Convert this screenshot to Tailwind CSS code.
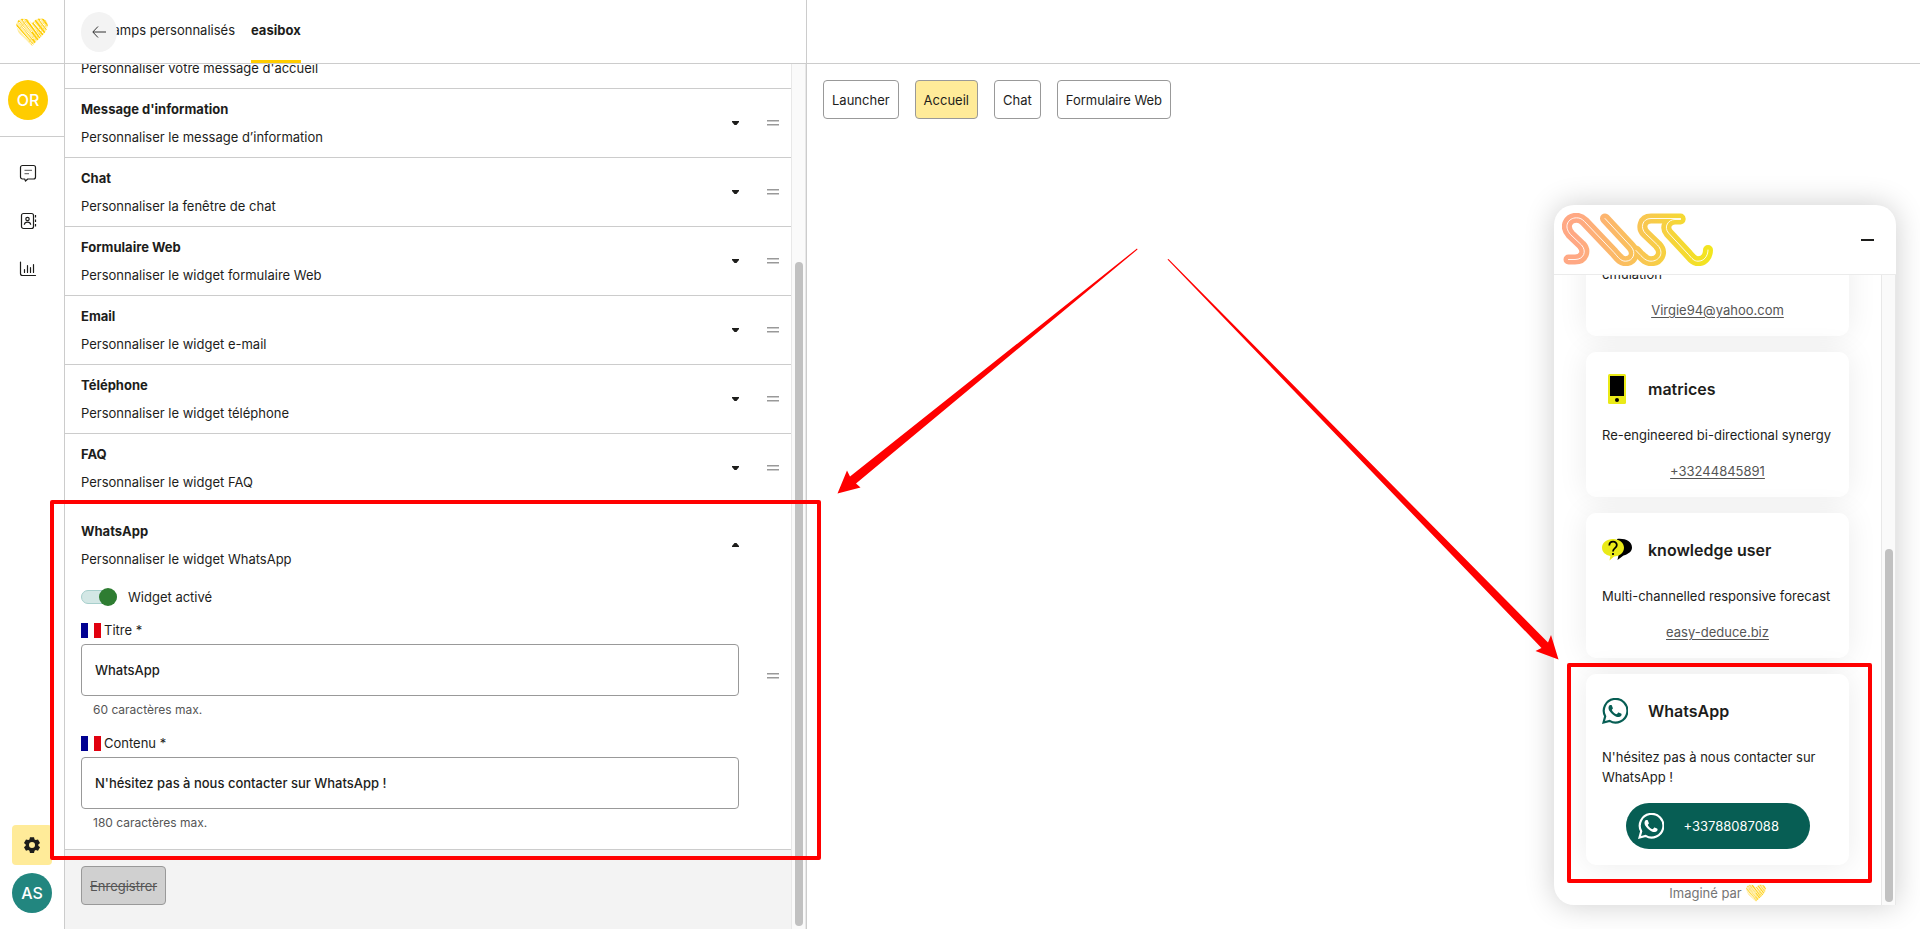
<!DOCTYPE html>
<html lang="fr">
<head>
    <meta charset="UTF-8" />
    <title>easibox</title>
    <script src="https://cdn.jsdelivr.net/npm/@tailwindcss/browser@4"></script>
</head>
<body class="relative flex h-screen overflow-hidden bg-white font-['Inter','Liberation_Sans',sans-serif] text-[13px] leading-5 text-[#1d1d1b]">

<!-- Shared shapes -->
<svg class="absolute h-0 w-0" aria-hidden="true">
    <defs>
        <clipPath id="heartClip">
            <path d="M16 28C11 22 1 16 .5 8 0 3 4 .5 8 .8c4 .2 6 2 8 4.700C18 2.500 21 .5 25 .6c4 .2 7 3 6.700 7C31 16 21 22 16 28z" />
        </clipPath>
        <symbol id="heart" viewBox="0 0 32 28">
            <g clip-path="url(#heartClip)" fill="none">
                <path d="M0 0h32v28H0z" fill="#ffefad" />
                <path d="M-2 4l20 24M1 1l20 26M5 0l17 22M9 0l15 20M11 3l14 16M-1 11l16 18M16 4l11 13M19 2l10 13M22 0l9 12M26 0l6 8" stroke="#ffcc00" stroke-width="1.500" />
                <path d="M-1 7l18 20M3 4l14 17M7 2l9 12M13 3l12 17M18 5l9 10M24 2l7 9M2 14l10 10" stroke="#fff" stroke-width="1" />
                <path d="M15 27L31 6M13 24L30 2M4 10L12 1" stroke="#ffd83d" stroke-width=".7" />
            </g>
        </symbol>
        <symbol id="whatsapp" viewBox="0 0 24 24">
            <path fill="currentColor" d="M17.472 14.382c-.297-.149-1.758-.867-2.030-.967-.273-.099-.471-.148-.670.150-.197.297-.767.966-.940 1.164-.173.199-.347.223-.644.075-.297-.150-1.255-.463-2.390-1.475-.883-.788-1.480-1.761-1.653-2.059-.173-.297-.018-.458.130-.606.134-.133.298-.347.446-.520.149-.174.198-.298.298-.497.099-.198.050-.371-.025-.520-.075-.149-.669-1.612-.916-2.207-.242-.579-.487-.5-.669-.510-.173-.008-.371-.010-.570-.010-.198 0-.520.074-.792.372-.272.297-1.040 1.016-1.040 2.479 0 1.462 1.065 2.875 1.213 3.074.149.198 2.096 3.200 5.077 4.487.709.306 1.262.489 1.694.625.712.227 1.360.195 1.871.118.571-.085 1.758-.719 2.006-1.413.248-.694.248-1.289.173-1.413-.074-.124-.272-.198-.570-.347z" />
            <path fill="none" stroke="currentColor" stroke-width="2" d="M1.400 22.600l1.550-5.700A10.900 10.900 0 1 1 7 21.100z" />
        </symbol>
        <symbol id="caret" viewBox="0 0 7 4">
            <path fill="currentColor" d="M0 0h7v1L4.500 4h-2L0 1z" />
        </symbol>
        <symbol id="drag" viewBox="0 0 12 6">
            <path fill="#999" d="M0 0h12v1.500H0zM0 4h12v1.500H0z" />
        </symbol>
    </defs>
</svg>

<!-- Sidebar -->
<nav class="flex w-[65px] shrink-0 flex-col border-r border-[#ccc]">
    <a href="#" aria-label="Accueil" class="flex h-16 shrink-0 items-center justify-center border-b border-[#ccc]">
        <svg class="h-7 w-8"><use href="#heart" /></svg>
    </a>
    <div class="flex h-[73px] shrink-0 items-center border-b border-[#ccc] pl-2">
        <span class="flex size-10 items-center justify-center rounded-full bg-[#ffcc00] text-base font-medium text-white">OR</span>
    </div>
    <div class="flex w-14 flex-1 flex-col items-center gap-6 pt-6">
        <a href="#" aria-label="Conversations">
            <svg class="size-6" viewBox="0 0 24 24" fill="none" stroke="#1d1d1b" stroke-width="1.200" stroke-linejoin="round"><path d="M6.500 4.500h11a2 2 0 0 1 2 2v9.500a2 2 0 0 1-2 2h-5.800L9.500 20l-.8-2H6.500a2 2 0 0 1-2-2V6.500a2 2 0 0 1 2-2z" /><path d="M8.500 9.300h7.500M8.500 12.700h4.500" stroke="#777" /></svg>
        </a>
        <a href="#" aria-label="Contacts">
            <svg class="size-6" viewBox="0 0 24 24" fill="none" stroke="#1d1d1b" stroke-width="1.200"><rect x="5.500" y="4.500" width="12" height="15" rx="2" /><circle cx="11.500" cy="10" r="1.700" /><path d="M8.300 15.700c.4-3.400 6-3.400 6.400 0" /><path d="M19.500 6v2.500M19.500 10.500V13M19.500 15v2.500" /></svg>
        </a>
        <a href="#" aria-label="Statistiques">
            <svg class="size-6" viewBox="0 0 24 24" fill="none" stroke="#1d1d1b" stroke-width="1.200" stroke-linecap="round"><path d="M4.500 5v11.500a2 2 0 0 0 2 2h13" /><path d="M8.500 12.500v3M11.500 8.500v7M14.500 10.500v5M17.500 7.500v8" /></svg>
        </a>
    </div>
    <div class="flex flex-col items-center gap-2 pb-4">
        <a href="#" aria-label="Paramètres" class="flex size-10 items-center justify-center rounded bg-[#ffeb99]">
            <svg class="size-[18px]" viewBox="0 0 24 24" fill="#1d1d1b"><path fill-rule="evenodd" d="M9.300 1.500h5.400l.7 3 1.600.9 3-.9 2.700 4.700-2.300 2v1.700l2.300 2-2.700 4.700-3-.9-1.600.9-.7 3H9.300l-.7-3-1.600-.9-3 .9-2.700-4.700 2.300-2v-1.700l-2.300-2L4 4.500l3 .9 1.600-.9zM12 8a4 4 0 1 0 0 8 4 4 0 0 0 0-8z" /></svg>
        </a>
        <span class="flex size-10 items-center justify-center rounded-full bg-[#22867f] text-base font-medium text-white">AS</span>
    </div>
</nav>

<div class="flex min-w-0 flex-1">
    <!-- Settings panel -->
    <section class="flex w-2/5 flex-col border-r border-[#ccc]">
        <header class="relative flex h-16 shrink-0 gap-4 border-b border-[#ccc] px-4">
            <a href="#" class="flex w-[154px] items-center justify-end whitespace-nowrap pb-[3px]">Champs personnalisés</a>
            <a href="#" class="flex items-center border-b-3 border-[#ffcc00] font-bold">easibox</a>
            <button type="button" aria-label="Retour" class="absolute top-3 left-4 flex h-10 w-9 items-center justify-center rounded-[50%] bg-[#f3f3f3]">
                <svg class="h-3 w-[14px]" viewBox="0 0 14 12" fill="none" stroke="#333"><path d="M14 6H1M6 .5L.8 6 6 11.500" /></svg>
            </button>
        </header>

        <div class="flex min-h-0 flex-1">
            <div class="flex min-w-0 flex-1 flex-col justify-end overflow-hidden">
                <div class="flex shrink-0 items-center border-b border-[#ccc] py-2.5">
                    <div class="flex-1 pl-4">
                        <h2 class="font-bold">Message d'accueil</h2>
                        <p class="mt-2">Personnaliser votre message d'accueil</p>
                    </div>
                </div>
                <div class="flex shrink-0 items-center border-b border-[#ccc] py-2.5">
                    <div class="flex-1 pl-4">
                        <h2 class="font-bold">Message d'information</h2>
                        <p class="mt-2">Personnaliser le message d’information</p>
                    </div>
                    <button type="button" aria-label="Ouvrir"><svg class="h-1 w-[7px]"><use href="#caret" /></svg></button>
                    <div class="w-[52px] pl-7"><svg class="h-1.5 w-3"><use href="#drag" /></svg></div>
                </div>
                <div class="flex shrink-0 items-center border-b border-[#ccc] py-2.5">
                    <div class="flex-1 pl-4">
                        <h2 class="font-bold">Chat</h2>
                        <p class="mt-2">Personnaliser la fenêtre de chat</p>
                    </div>
                    <button type="button" aria-label="Ouvrir"><svg class="h-1 w-[7px]"><use href="#caret" /></svg></button>
                    <div class="w-[52px] pl-7"><svg class="h-1.5 w-3"><use href="#drag" /></svg></div>
                </div>
                <div class="flex shrink-0 items-center border-b border-[#ccc] py-2.5">
                    <div class="flex-1 pl-4">
                        <h2 class="font-bold">Formulaire Web</h2>
                        <p class="mt-2">Personnaliser le widget formulaire Web</p>
                    </div>
                    <button type="button" aria-label="Ouvrir"><svg class="h-1 w-[7px]"><use href="#caret" /></svg></button>
                    <div class="w-[52px] pl-7"><svg class="h-1.5 w-3"><use href="#drag" /></svg></div>
                </div>
                <div class="flex shrink-0 items-center border-b border-[#ccc] py-2.5">
                    <div class="flex-1 pl-4">
                        <h2 class="font-bold">Email</h2>
                        <p class="mt-2">Personnaliser le widget e-mail</p>
                    </div>
                    <button type="button" aria-label="Ouvrir"><svg class="h-1 w-[7px]"><use href="#caret" /></svg></button>
                    <div class="w-[52px] pl-7"><svg class="h-1.5 w-3"><use href="#drag" /></svg></div>
                </div>
                <div class="flex shrink-0 items-center border-b border-[#ccc] py-2.5">
                    <div class="flex-1 pl-4">
                        <h2 class="font-bold">Téléphone</h2>
                        <p class="mt-2">Personnaliser le widget téléphone</p>
                    </div>
                    <button type="button" aria-label="Ouvrir"><svg class="h-1 w-[7px]"><use href="#caret" /></svg></button>
                    <div class="w-[52px] pl-7"><svg class="h-1.5 w-3"><use href="#drag" /></svg></div>
                </div>
                <div class="flex shrink-0 items-center border-b border-[#ccc] py-2.5">
                    <div class="flex-1 pl-4">
                        <h2 class="font-bold">FAQ</h2>
                        <p class="mt-2">Personnaliser le widget FAQ</p>
                    </div>
                    <button type="button" aria-label="Ouvrir"><svg class="h-1 w-[7px]"><use href="#caret" /></svg></button>
                    <div class="w-[52px] pl-7"><svg class="h-1.5 w-3"><use href="#drag" /></svg></div>
                </div>

                <!-- WhatsApp, open -->
                <form class="flex shrink-0 items-center border-b border-[#ccc]">
                    <div class="flex flex-1 flex-col pt-[18px] pb-4 pl-4">
                        <div class="flex items-center">
                            <div class="flex-1">
                                <h2 class="font-bold">WhatsApp</h2>
                                <p class="mt-2">Personnaliser le widget WhatsApp</p>
                            </div>
                            <button type="button" aria-label="Fermer"><svg class="h-1 w-[7px] rotate-180"><use href="#caret" /></svg></button>
                        </div>
                        <label class="mt-[18px] flex items-center gap-[11px]">
                            <input type="checkbox" checked class="relative h-3.5 w-9 appearance-none rounded-full border border-[#a7cfcc] bg-[#d3e7e5] before:absolute before:-top-[3px] before:-right-px before:size-[18px] before:rounded-full before:bg-[#2e7d32]" />
                            Widget activé
                        </label>
                        <label for="titre" class="mt-[13px] flex items-center gap-[3px]">
                            <svg class="h-[15px] w-5" viewBox="0 0 20 15"><path fill="#000091" d="M0 0h7v15H0z" /><path fill="#e1000f" d="M13 0h7v15h-7z" /></svg>
                            Titre *
                        </label>
                        <input id="titre" type="text" value="WhatsApp" class="mt-1 h-[52px] w-full rounded border border-[#999] px-[13px] font-medium" />
                        <p class="mt-1 pl-3 text-xs leading-5 text-[#555]">60 caractères max.</p>
                        <label for="contenu" class="mt-[13px] flex items-center gap-[3px]">
                            <svg class="h-[15px] w-5" viewBox="0 0 20 15"><path fill="#000091" d="M0 0h7v15H0z" /><path fill="#e1000f" d="M13 0h7v15h-7z" /></svg>
                            Contenu *
                        </label>
                        <input id="contenu" type="text" value="N'hésitez pas à nous contacter sur WhatsApp !" class="mt-1 h-[52px] w-full rounded border border-[#999] px-[13px] font-medium" />
                        <p class="mt-1 pl-3 text-xs leading-5 text-[#555]">180 caractères max.</p>
                    </div>
                    <div class="w-[52px] pl-7"><svg class="h-1.5 w-3"><use href="#drag" /></svg></div>
                </form>
                <div class="shrink-0 bg-[#f3f3f3] px-4 pt-4 pb-6">
                    <button type="submit" disabled class="h-[39px] rounded border border-[#999] bg-[#d0d0d0] px-2 text-[#555] line-through">Enregistrer</button>
                </div>
            </div>
            <!-- Scrollbar -->
            <div class="flex w-[15px] flex-col items-center justify-end border-x border-[#e8e8e8] bg-[#fafafa] pb-[3px]">
                <div class="h-[77%] w-2 rounded-full bg-[#c1c1c1]"></div>
            </div>
        </div>
    </section>

    <!-- Preview -->
    <main class="relative min-w-0 flex-1">
        <div class="h-16 border-b border-[#ccc]"></div>
        <div class="flex gap-4 p-4">
            <button type="button" class="h-[39px] rounded border border-[#999] px-2">Launcher</button>
            <button type="button" class="h-[39px] rounded border border-[#999] bg-[#ffeb99] px-2">Accueil</button>
            <button type="button" class="h-[39px] rounded border border-[#999] px-2">Chat</button>
            <button type="button" class="h-[39px] rounded border border-[#999] px-2">Formulaire Web</button>
        </div>

        <!-- Floating widget -->
        <aside class="absolute right-6 bottom-6 flex h-[700px] w-[342px] flex-col overflow-hidden rounded-[20px] rounded-br-none bg-white shadow-[0_0_30px_rgba(0,0,0,0.2)]">
            <header class="flex h-[70px] shrink-0 items-center justify-between border-b border-[#ebebeb] pr-[22px] pl-2">
                <svg class="h-[53px] w-[151px]" viewBox="0 0 151 53" fill="none" stroke-linecap="round" stroke-linejoin="round">
                    <defs>
                        <linearGradient id="logoGradient" gradientUnits="userSpaceOnUse" x1="0" y1="0" x2="151" y2="0">
                            <stop offset=".1" stop-color="#ffa884" />
                            <stop offset="1" stop-color="#f2e71c" />
                        </linearGradient>
                        <g id="logoLines">
                            <path d="M6.500 46.500H13C22 46.500 25 38 19.500 32L8.500 21.500C1 13 6.500 4.800 14.500 4.800c3.500 0 5.500 1.200 8 3.700L52 39.500c4 4.500 6.500 8.700 11.500 8.700 8 0 11-8.700 5.500-14.700L43 5.500" />
                            <path d="M118.500 5.500H89C80 5.500 78 15 83.500 20.500l12 11.500c7.500 8 1.500 16.200-6.500 16.200-5 0-8-3.500-11.500-7L74 37.500" />
                            <path d="M118.500 6.500H113c-7 0-11.500 7.500-6.500 13.500l20 21.500c3.500 4 5.500 6.700 9.500 6.700 6 0 10-5 10-11.200" />
                        </g>
                    </defs>
                    <use href="#logoLines" stroke="url(#logoGradient)" stroke-width="10" />
                    <use href="#logoLines" stroke="#fff" stroke-width=".9" />
                </svg>
                <button type="button" aria-label="Réduire" class="flex h-5 items-center"><span class="block h-0.5 w-[13px] bg-[#1d1d1b]"></span></button>
            </header>
            <div class="flex min-h-0 flex-1">
                <div class="flex flex-1 flex-col justify-end gap-4 overflow-hidden px-8">
                    <article class="shrink-0 rounded-[10px] bg-white p-4 shadow-[0_0_30px_rgba(0,0,0,0.08)]">
                        <p>emulation</p>
                        <p class="mt-4 text-center"><a href="#" class="text-[#555] underline underline-offset-2">Virgie94@yahoo.com</a></p>
                    </article>
                    <article class="shrink-0 rounded-[10px] bg-white p-4 shadow-[0_0_30px_rgba(0,0,0,0.08)]">
                        <div class="flex h-[41px] items-center gap-4">
                            <svg class="size-[30px]" viewBox="0 0 30 30"><rect x="6" width="18" height="30" rx="1.500" fill="#eaea18" /><path d="M8 2h14v20H8z" /><circle cx="15" cy="26" r="2" /></svg>
                            <h3 class="text-base font-semibold">matrices</h3>
                        </div>
                        <p class="mt-4">Re-engineered bi-directional synergy</p>
                        <p class="mt-4 text-center"><a href="#" class="text-[#555] underline underline-offset-2">+33244845891</a></p>
                    </article>
                    <article class="shrink-0 rounded-[10px] bg-white p-4 shadow-[0_0_30px_rgba(0,0,0,0.08)]">
                        <div class="flex h-[41px] items-center gap-4">
                            <svg class="size-[30px]" viewBox="0 0 30 30"><path d="M15 4c8-1 15 2.500 15 8.500 0 4-3.500 6.500-8.500 8L15.500 25l1-5z" /><path d="M11 4c6.300 0 11 3.700 11 8.700 0 5-4.500 8.500-10 8.700L7.500 25.500l.8-4.500C3.500 20 0 17 0 12.700 0 7.700 4.700 4 11 4z" fill="#eaea18" /><path d="M7.300 10.500c0-5 7.500-5 7.500-.5 0 3.200-3.800 3-3.800 6.500M11 18v2" fill="none" stroke="#000" stroke-width="1.800" /></svg>
                            <h3 class="text-base font-semibold">knowledge user</h3>
                        </div>
                        <p class="mt-4">Multi-channelled responsive forecast</p>
                        <p class="mt-4 text-center"><a href="#" class="text-[#555] underline underline-offset-2">easy-deduce.biz</a></p>
                    </article>
                    <article class="shrink-0 rounded-[10px] bg-white p-4 shadow-[0_0_30px_rgba(0,0,0,0.08)]">
                        <div class="flex h-[41px] items-center gap-5">
                            <svg class="size-[26px] text-[#075e54]"><use href="#whatsapp" /></svg>
                            <h3 class="text-base font-semibold">WhatsApp</h3>
                        </div>
                        <p class="mt-4">N'hésitez pas à nous contacter sur WhatsApp !</p>
                        <a href="#" class="mx-auto mt-4 flex h-[46px] w-[184px] items-center gap-5 rounded-full bg-[#075e54] pl-3 text-white">
                            <svg class="size-[26px]"><use href="#whatsapp" /></svg>
                            +33788087088
                        </a>
                    </article>
                    <p class="flex shrink-0 items-center justify-center gap-1 pt-0.5 pb-0.5 text-[#757575]">Imaginé par <svg class="h-[18px] w-5"><use href="#heart" /></svg></p>
                </div>
                <div class="flex w-[15px] flex-col items-center justify-end border-x border-[#e8e8e8] bg-[#fafafa] pb-[3px]">
                    <div class="h-[353px] w-2 rounded-full bg-[#c1c1c1]"></div>
                </div>
            </div>
        </aside>
    </main>
</div>

<!-- Annotations -->
<svg class="pointer-events-none absolute inset-0 h-full w-full" viewBox="0 0 1920 929" aria-hidden="true">
    <g fill="none" stroke="#f00" stroke-width="4" stroke-linejoin="round">
        <path d="M52 502h767v356H52zM1569 665h301v216h-301z" />
    </g>
    <g fill="#f00">
        <path d="M1137 248.500l.5 1L856 483.500l4.500 4-23 6L847 470.500l3 6z" />
        <path d="M1167.500 259.500l1-.5L1548 642.500l3-7.500 7.500 24.500-23-8.500 6-3z" />
    </g>
</svg>

</body>
</html>
